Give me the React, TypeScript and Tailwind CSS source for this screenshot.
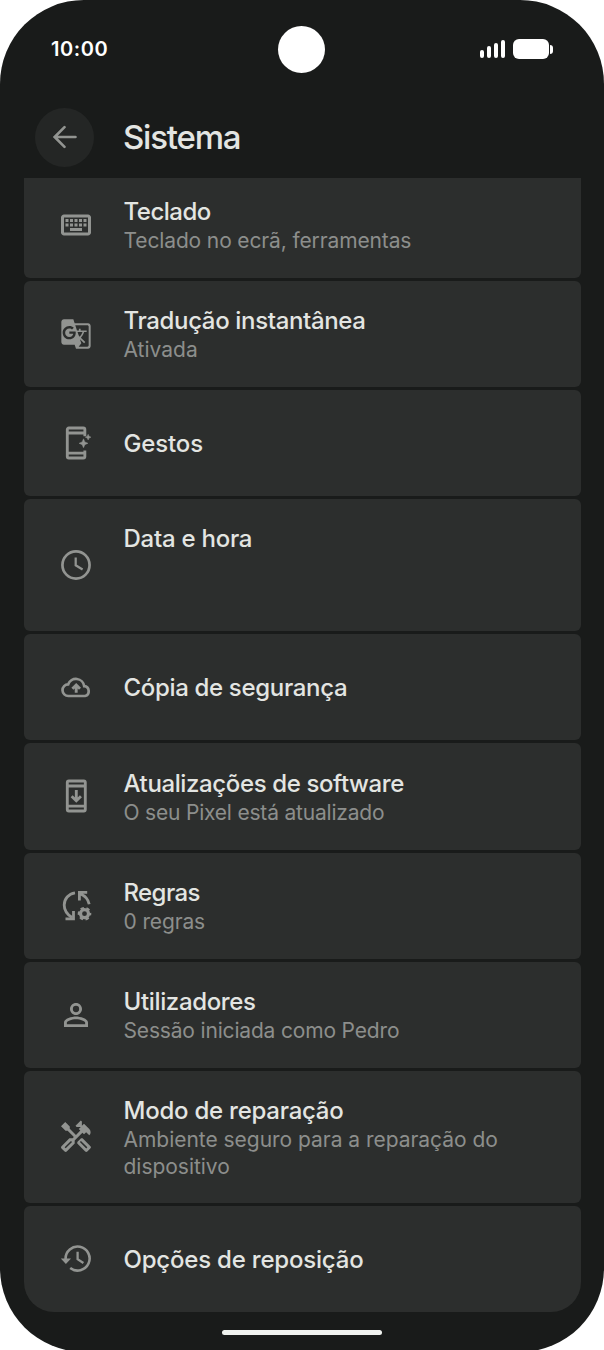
import type { ReactNode } from 'react';
import { MdGTranslate, MdOutlineHandyman, MdOutlineKeyboard, MdOutlinePersonOutline } from 'react-icons/md';

function GestureIcon() {
	return (
		<svg width="36" height="36" viewBox="0 0 24 24" fill="none" stroke="currentColor" strokeWidth="1.9">
			<path d="M17.9 7.5V3a1 1 0 0 0-1-1H7.2a1 1 0 0 0-1 1v18a1 1 0 0 0 1 1h9.7a1 1 0 0 0 1-1v-4M6.2 5.3h11.7M6.2 18.7h11.7" />
			<path
				d="M17 9.2l.9 2.1 2.1.9-2.1.9-.9 2.1-.9-2.1-2.1-.9 2.1-.9zM20.1 6.2l.6 1.3 1.3.6-1.3.6-.6 1.3-.6-1.3-1.3-.6 1.3-.6z"
				fill="currentColor"
				stroke="currentColor"
				strokeWidth=".3"
			/>
		</svg>
	);
}

function ClockIcon() {
	return (
		<svg width="36" height="36" viewBox="0 0 24 24" fill="none" stroke="currentColor">
			<circle cx="12" cy="12" r="9.05" strokeWidth="1.8" />
			<path d="M11.8 7v5.2l4.6 2.8" strokeWidth="1.5" />
		</svg>
	);
}

function CloudIcon() {
	return (
		<svg width="36" height="36" viewBox="0 0 36 36" fill="none" stroke="currentColor" strokeWidth="2.7">
			<path d="M10.5 27a5.8 5.8 0 0 1-.3-11.7 8.3 8.3 0 0 1 16 1.9 5 5 0 0 1 .8 9.8z" />
			<path d="M18.2 23.7v-6M14.4 19.7l3.8-3.7 3.8 3.7" strokeWidth="2.9" />
		</svg>
	);
}

function UpdateIcon() {
	return (
		<svg width="36" height="36" viewBox="0 0 24 24" fill="none" stroke="currentColor" strokeWidth="1.9">
			<rect x="6.2" y="2" width="12" height="20" rx="1" />
			<path d="M6.2 5.3h12M6.2 18.7h12M12.2 8v7M9.1 12.1l3.1 3.1 3.1-3.1" />
		</svg>
	);
}

function RulesIcon() {
	return (
		<svg width="36" height="36" viewBox="0 0 36 36" fill="none" stroke="currentColor" strokeWidth="2.8">
			<path d="M17 4.8C10.5 5.7 6.2 11 6.2 17c0 5.500 3 9.500 7.800 12.500" />
			<path d="M7.500 30.900h8v-8" />
			<path d="M29.200 4.400h-7.800v8M22.200 5.700c4.800 2 8 5.500 9 10.500" />
			<circle cx="26.500" cy="25.700" r="4" strokeWidth="3.200" />
			<circle cx="26.500" cy="25.700" r="5.600" strokeWidth="2.400" strokeDasharray="3.300 2.564" strokeDashoffset="1.650" />
		</svg>
	);
}

function ResetIcon() {
	return (
		<svg width="36" height="36" viewBox="0 0 36 36" fill="none" stroke="currentColor" strokeWidth="2.6">
			<path d="M7.6 18a12 12 0 1 1 4.6 9" />
			<path d="M2.8 17.500h10.200l-5.100 5.500z" fill="currentColor" stroke="none" />
			<path d="M19.600 10.700v7.400l5.800 3.900" strokeWidth="2.300" />
		</svg>
	);
}

type Item = { title: string; sub?: string; icon: ReactNode; size: string; titleClass: string; subClass?: string };

const items: Item[] = [
	{
		title: 'Teclado',
		sub: 'Teclado no ecrã, ferramentas',
		icon: <MdOutlineKeyboard size={36} />,
		size: '-mt-[6.5px] h-[106.3px] rounded-[6px]',
		titleClass: 'tracking-[-0.5px]',
		subClass: 'tracking-[-0.13px]',
	},
	{
		title: 'Tradução instantânea',
		sub: 'Ativada',
		icon: <MdGTranslate size={32} />,
		size: 'h-[106.2px] rounded-[6px]',
		titleClass: 'tracking-[-0.35px]',
	},
	{ title: 'Gestos', icon: <GestureIcon />, size: 'h-[106.2px] rounded-[6px]', titleClass: 'tracking-[-0.15px]' },
	{
		title: 'Data e hora',
		icon: <ClockIcon />,
		size: 'h-[132px] rounded-[6px]',
		titleClass: 'tracking-[-0.25px] pb-[54px]',
	},
	{
		title: 'Cópia de segurança',
		icon: <CloudIcon />,
		size: 'h-[106.2px] rounded-[6px]',
		titleClass: 'tracking-[-0.33px]',
	},
	{
		title: 'Atualizações de software',
		sub: 'O seu Pixel está atualizado',
		icon: <UpdateIcon />,
		size: 'h-[106.2px] rounded-[6px]',
		titleClass: 'tracking-[-0.38px]',
		subClass: 'tracking-[-0.2px]',
	},
	{
		title: 'Regras',
		sub: '0 regras',
		icon: <RulesIcon />,
		size: 'h-[106.2px] rounded-[6px]',
		titleClass: 'tracking-[-0.6px]',
		subClass: 'tracking-[-0.13px]',
	},
	{
		title: 'Utilizadores',
		sub: 'Sessão iniciada como Pedro',
		icon: <MdOutlinePersonOutline size={36} />,
		size: 'h-[106.2px] rounded-[6px]',
		titleClass: 'tracking-[-0.35px]',
		subClass: 'tracking-[-0.17px]',
	},
	{
		title: 'Modo de reparação',
		sub: 'Ambiente seguro para a reparação do dispositivo',
		icon: <MdOutlineHandyman size={36} />,
		size: 'h-[132.3px] rounded-[6px]',
		titleClass: 'tracking-[-0.24px]',
		subClass: 'tracking-[-0.03px]',
	},
	{
		title: 'Opções de reposição',
		icon: <ResetIcon />,
		size: 'h-[106.2px] rounded-t-[6px] rounded-b-[30px]',
		titleClass: 'tracking-[-0.2px]',
	},
];

function SettingsRow({ item }: { item: Item }) {
	return (
		<li className={`flex shrink-0 items-center bg-[#2c2e2d] ${item.size}`}>
			<div className="ml-[34.5px] flex w-9 shrink-0 justify-center text-[#929491]">{item.icon}</div>
			<div className="ml-[29.5px] w-[400px] pt-px">
				<h2 className={`text-[24px] leading-[32px] font-medium text-[#e3e5e2] ${item.titleClass}`}>{item.title}</h2>
				{item.sub && <p className={`text-[21px] leading-[26.5px] text-[#8c8e8c] ${item.subClass ?? ''}`}>{item.sub}</p>}
			</div>
		</li>
	);
}

function StatusBar() {
	return (
		<div className="grid h-[98px] shrink-0 grid-cols-3 items-center px-[51px] text-white">
			<span className="text-[20px] font-semibold tracking-[0.6px]">10:00</span>
			<span className="size-[47px] justify-self-center rounded-full bg-white" />
			<div className="flex items-center justify-end gap-2">
				<div className="flex items-end gap-[3px]">
					<span className="h-2 w-1 rounded-full bg-white" />
					<span className="h-3 w-1 rounded-full bg-white" />
					<span className="h-[15.5px] w-1 rounded-full bg-white" />
					<span className="h-[18px] w-1 rounded-full bg-white" />
				</div>
				<div className="flex items-center gap-px">
					<span className="h-5 w-9 rounded-[6px] bg-white" />
					<span className="h-[9px] w-[3px] rounded-r-full bg-white" />
				</div>
			</div>
		</div>
	);
}

export default function App() {
	return (
		<main className="h-[1350px] w-[604px] overflow-hidden bg-white font-['Inter',sans-serif]">
			<div className="flex h-[1352px] flex-col overflow-hidden rounded-[84px] bg-[#191b1a]">
				<StatusBar />
				<header className="flex h-20 shrink-0 items-center pb-0.5 pl-[35px]">
					<button className="flex size-[59px] items-center justify-center rounded-full bg-[#242625] text-[#929491]">
						<svg width="24" height="24" viewBox="0 0 24 24" fill="none" stroke="currentColor" strokeWidth="2.6" strokeLinecap="round">
							<path d="M22.5 12H2M11.5 2.2 1.7 12l9.8 9.8" />
						</svg>
					</button>
					<h1 className="ml-[29px] text-[33px] leading-10 font-[450] tracking-[-1.2px] text-[#e3e5e2]">Sistema</h1>
				</header>
				<ul className="mx-[23.5px] flex shrink-0 flex-col gap-[3px] overflow-hidden">
					{items.map(item => (
						<SettingsRow key={item.title} item={item} />
					))}
				</ul>
				<div className="mt-[18px] h-[5px] w-40 shrink-0 self-center rounded-full bg-[#f0f2ef]" />
			</div>
		</main>
	);
}
